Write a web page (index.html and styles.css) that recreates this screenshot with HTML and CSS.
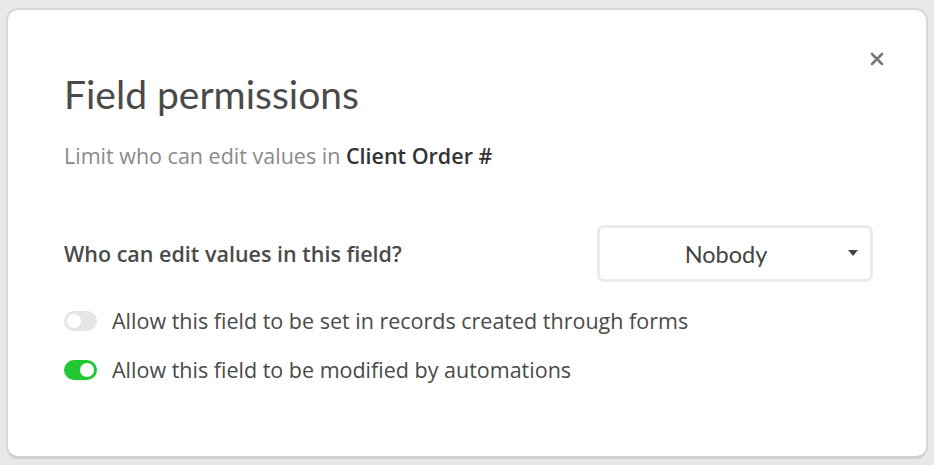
FILE: index.html
```html
<!DOCTYPE html>
<html>
<head>
<meta charset="utf-8">
<link rel="stylesheet" href="styles.css">
</head>
<body>
<div class="modal">
  <button class="close" aria-label="Close">
    <svg width="14" height="14" viewBox="0 0 14 14"><path d="M2 2 L12 12 M12 2 L2 12" stroke="#777" stroke-width="2.6" stroke-linecap="round"/></svg>
  </button>
  <h1 class="title">Field permissions</h1>
  <p class="subtitle">Limit who can edit values in <strong>Client Order #</strong></p>
  <div class="row">
    <span class="label">Who can edit values in this field?</span>
    <div class="select">
      <span class="select-value">Nobody</span>
      <svg class="caret" width="10" height="6" viewBox="0 0 10 6"><path d="M0 0 H10 L5 6 Z" fill="#444"/></svg>
    </div>
  </div>
  <div class="options">
    <label class="option"><span class="toggle"><span class="knob"></span></span><span>Allow this field to be set in records created through forms</span></label>
    <label class="option"><span class="toggle on"><span class="knob"></span></span><span>Allow this field to be modified by automations</span></label>
  </div>
</div>
</body>
</html>
```
FILE: styles.css
```css
html, body {
  margin: 0;
  padding: 0;
  background: #e8e8e8;
}
body {
  padding: 8px 6px 8px 6px;
  font-family: "Open Sans", "Noto Sans", sans-serif;
  color: #4a4a4a;
}
.modal {
  position: relative;
  box-sizing: border-box;
  height: 451px;
  background: #fff;
  border: 2px solid #d8d8d8;
  border-bottom: 3px solid #d0d0d0;
  border-radius: 12px;
  padding: 60px 53px 0 56px;
}
.close {
  position: absolute;
  top: 42px;
  right: 42px;
  background: none;
  border: 0;
  padding: 0;
  width: 14px;
  height: 14px;
  cursor: pointer;
}
.close svg { display: block; }
.title {
  margin: 0;
  font-family: "Lato", "Open Sans", sans-serif;
  font-weight: 400;
  font-size: 39px;
  line-height: 48px;
  color: #4a4a4a;
}
.subtitle {
  margin: 24px 0 0 0;
  font-size: 21.5px;
  line-height: 28px;
  color: #8a8a8a;
}
.subtitle strong {
  color: #333;
  font-weight: 600;
}
.row {
  display: flex;
  align-items: center;
  justify-content: space-between;
  margin-top: 55px;
}
.label {
  font-size: 21.5px;
  font-weight: 600;
  color: #4a4a4a;
}
.select {
  position: relative;
  box-sizing: border-box;
  width: 276px;
  height: 57px;
  border: 3px solid #ebebeb;
  border-radius: 7px;
  padding-right: 18px;
  display: flex;
  align-items: center;
  justify-content: center;
}
.select-value {
  font-family: "Lato", "Open Sans", sans-serif;
  font-size: 23.5px;
  color: #444;
}
.caret {
  position: absolute;
  right: 12px;
  top: 22px;
}
.options {
  margin-top: 25px;
  display: flex;
  flex-direction: column;
  gap: 21px;
}
.option {
  display: flex;
  align-items: center;
  gap: 15px;
  font-size: 21.5px;
  line-height: 28px;
  color: #4a4a4a;
}
.toggle {
  position: relative;
  box-sizing: border-box;
  width: 33px;
  height: 20px;
  border-radius: 10px;
  background: #e6e6e6;
  flex: none;
}
.toggle .knob {
  position: absolute;
  top: 3px;
  left: 3px;
  width: 14px;
  height: 14px;
  border-radius: 50%;
  background: #fff;
}
.toggle.on {
  background: #20c933;
}
.toggle.on .knob {
  left: 16px;
}
```
